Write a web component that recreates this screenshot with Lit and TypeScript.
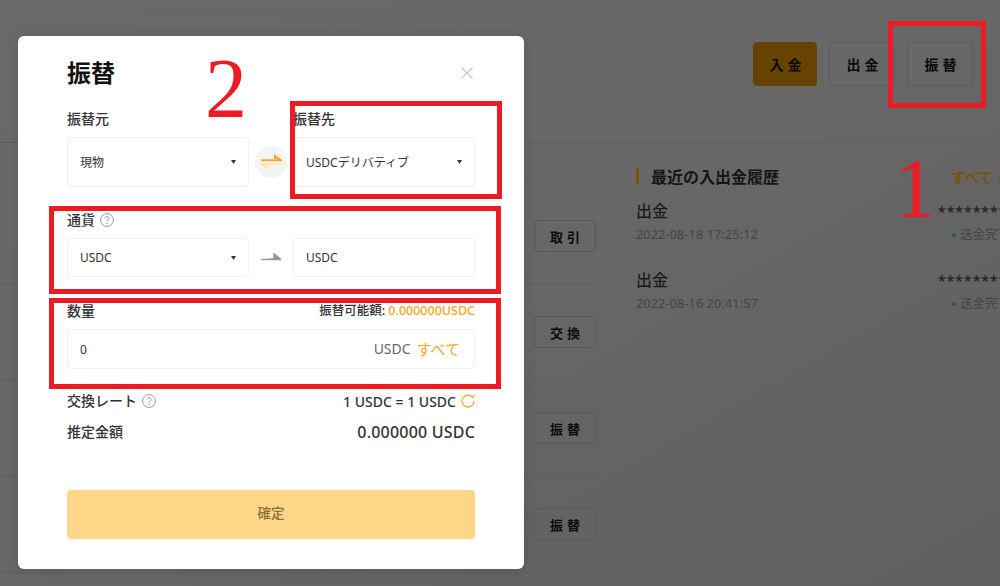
import { LitElement, html, css } from "lit";
import { customElement } from "lit/decorators.js";

const caret = html`<svg class="caret" width="5" height="4" viewBox="0 0 5 4"><path d="M0 0H5L2.5 4Z" fill="#333"/></svg>`;
const help = html`<svg class="help" width="14" height="14" viewBox="0 0 14 14"><circle cx="7" cy="7" r="6.4" fill="none" stroke="#999" stroke-width="1"/><path d="M5.1 5.5a1.9 1.9 0 1 1 2.9 1.6c-.7.45-1 .8-1 1.6" fill="none" stroke="#999" stroke-width="1"/><circle cx="7" cy="10.4" r=".7" fill="#999"/></svg>`;

@customElement("app-root")
export class AppRoot extends LitElement {
  static styles = css`
    :host {
      display: block;
      position: relative;
      width: 1000px;
      height: 586px;
      overflow: hidden;
      font-family: "Noto Sans", "Noto Sans CJK JP", sans-serif;
      color: #1a1a1a;
    }
    .page {
      height: 586px;
      background: linear-gradient(150deg, #6a6a6a 0%, #676767 50%, #5f5f5f 100%);
      display: flex;
      flex-direction: column;
    }
    .topbar { height: 11px; flex: none; border-bottom: 1px solid #646464; box-sizing: border-box; }
    .head {
      height: 132px;
      flex: none;
      box-sizing: border-box;
      border-bottom: 1px solid #5d5d5d;
      display: flex;
      justify-content: flex-end;
      align-items: flex-start;
      padding: 31px 27px 0 0;
      gap: 12px;
    }
    .hbtn {
      height: 44px;
      width: 66px;
      box-sizing: border-box;
      border: 1px solid #5c5c5c;
      border-radius: 4px;
      display: flex;
      align-items: center;
      justify-content: center;
      padding-left: 5px;
      font-size: 14px;
      font-weight: 700;
      letter-spacing: 4px;
      color: #0a0a0a;
    }
    .hbtn.pri { background: #664400; border-color: #664400; width: 64px; }
    .main { display: flex; flex: 1; }
    .rows { width: 596px; flex: none; padding-top: 46px; box-sizing: border-box; }
    .row {
      height: 96px;
      box-sizing: border-box;
      padding-bottom: 1px;
      border-bottom: 1px solid #5f5f5f;
      display: flex;
      align-items: center;
      justify-content: flex-end;
    }
    .rbtn {
      width: 62px;
      height: 32px;
      box-sizing: border-box;
      border: 1px solid #595959;
      border-radius: 3px;
      display: flex;
      align-items: center;
      justify-content: center;
      padding-left: 4px;
      font-size: 13px;
      font-weight: 700;
      letter-spacing: 4px;
      color: #0a0a0a;
    }
    .hist { flex: 1; padding: 23px 0 0 40px; min-width: 0; }
    .hist-head { display: flex; align-items: center; height: 20px; white-space: nowrap; }
    .hist-head .bar { width: 3px; height: 16px; background: #7a5208; margin-right: 12px; flex: none; }
    .hist-head .ttl { font-size: 16px; font-weight: 700; color: #161616; width: 300px; flex: none; }
    .hist-head .all { font-size: 14.5px; font-weight: 700; color: #7a5208; }
    .hist-head .chev { font-size: 14px; font-weight: 700; color: #7a5208; margin-left: 5px; }
    .entry { display: flex; margin-top: 15px; height: 54px; white-space: nowrap; }
    .entry .l { width: 302px; flex: none; }
    .entry .k { font-size: 16px; font-weight: 500; line-height: 20px; color: #1a1a1a; }
    .entry .d { font-size: 12.5px; line-height: 16px; margin-top: 6px; color: #444; letter-spacing: .2px; }
    .entry .stars { font-size: 14px; line-height: 18px; margin-top: 2px; color: #222; font-weight: 500; letter-spacing: 1px; }
    .entry .st { font-size: 12.5px; line-height: 16px; margin-top: 6px; color: #444; display: flex; align-items: center; padding-left: 14px; }
    .dot { width: 4px; height: 4px; border-radius: 50%; background: #0d6b45; margin-right: 4px; flex: none; }

    .modal {
      position: absolute;
      left: 18px;
      top: 36px;
      width: 506px;
      height: 533px;
      box-sizing: border-box;
      background: #fff;
      border-radius: 6px;
      padding: 21px 49px 30px 49px;
      box-shadow: 0 0 16px rgba(0,0,0,.12);
    }
    .title-row { display: flex; justify-content: space-between; align-items: center; height: 32px; }
    .title { font-size: 24px; font-weight: 700; color: #111; line-height: 32px; }
    .close { margin-right: 2px; }
    .lbl { font-size: 14px; font-weight: 500; line-height: 18px; color: #333; display: flex; align-items: center; gap: 5px; }
    .grid { display: grid; grid-template-columns: 182px 44px 182px; align-items: center; }
    .mt21 { margin-top: 21px; }
    .mt9 { margin-top: 9px; }
    .field {
      box-sizing: border-box;
      border: 1px solid #f0f0f0;
      border-radius: 4px;
      display: flex;
      align-items: center;
      justify-content: space-between;
      padding: 0 12px;
      font-size: 12px;
      font-weight: 400;
      color: #333;
      white-space: nowrap;
    }
    .h50 { height: 50px; }
    .h39 { height: 39px; }
    .mid { display: flex; justify-content: center; align-items: center; }
    .swap { width: 32px; height: 32px; border-radius: 50%; background: #f4f4f4; display: flex; align-items: center; justify-content: center; }
    .sec2 { margin-top: 24px; }
    .sec3 { margin-top: 25px; height: 18px; }
    .between { display: flex; justify-content: space-between; align-items: center; }
    .avail { font-size: 12.5px; line-height: 18px; font-weight: 500; color: #333; white-space: nowrap; }
    .org { color: #f5a623; }
    .amount {
      height: 40px;
      margin-top: 9px;
      box-sizing: border-box;
      border: 1px solid #f0f0f0;
      border-radius: 4px;
      display: flex;
      align-items: center;
      justify-content: space-between;
      padding: 0 14px 0 12px;
      font-size: 12px;
      color: #333;
    }
    .amount .unit { font-size: 14px; line-height: 20px; color: #666; display: flex; gap: 6px; align-items: center; }
    .amount .unit .org { font-size: 15px; }
    .rate { margin-top: 23px; height: 18px; }
    .est { margin-top: 13px; height: 18px; }
    .val { font-size: 14px; font-weight: 500; color: #333; display: flex; align-items: center; gap: 5px; white-space: nowrap; }
    .val.big { font-size: 16px; letter-spacing: .2px; }
    .submit {
      margin-top: 49px;
      height: 49px;
      box-sizing: border-box;
      padding-bottom: 5px;
      background: #ffd587;
      border-radius: 4px;
      display: flex;
      align-items: center;
      justify-content: center;
      font-size: 13.5px;
      font-weight: 500;
      color: #8a6f3e;
    }

    .mark { position: absolute; box-sizing: border-box; border: 5px solid #ed1c24; }
    .m1 { left: 888px; top: 21px; width: 98px; height: 87px; }
    .m2 { left: 290px; top: 101px; width: 212px; height: 98px; }
    .m3 { left: 49px; top: 206px; width: 452px; height: 88px; }
    .m4 { left: 49px; top: 298px; width: 452px; height: 91px; }
    .num {
      position: absolute;
      font-family: "Liberation Serif", serif;
      color: #ed1c24;
      line-height: 1;
      font-size: 84px;
    }
    .n1 { left: 894px; top: 147px; }
    .n2 { left: 205px; top: 47px; }
  `;

  render() {
    const rows = ["取引", "交換", "振替", "振替"];
    return html`
      <div class="page">
        <div class="topbar"></div>
        <div class="head">
          <div class="hbtn pri">入金</div>
          <div class="hbtn">出金</div>
          <div class="hbtn">振替</div>
        </div>
        <div class="main">
          <div class="rows">
            ${rows.map((r) => html`<div class="row"><div class="rbtn">${r}</div></div>`)}
          </div>
          <div class="hist">
            <div class="hist-head">
              <span class="bar"></span><span class="ttl">最近の入出金履歴</span><span class="all">すべて</span><span class="chev">›</span>
            </div>
            <div class="entry">
              <div class="l"><div class="k">出金</div><div class="d">2022-08-18 17:25:12</div></div>
              <div><div class="stars">********</div><div class="st"><span class="dot"></span>送金完了</div></div>
            </div>
            <div class="entry">
              <div class="l"><div class="k">出金</div><div class="d">2022-08-16 20:41:57</div></div>
              <div><div class="stars">********</div><div class="st"><span class="dot"></span>送金完了</div></div>
            </div>
          </div>
        </div>
      </div>

      <div class="modal">
        <div class="title-row">
          <div class="title">振替</div>
          <svg class="close" width="12" height="12" viewBox="0 0 12 12"><path d="M.5.5l11 11M11.5.5l-11 11" stroke="#c8c8c8" stroke-width="1.3" fill="none"/></svg>
        </div>
        <div class="grid mt21">
          <div class="lbl">振替元</div><div></div><div class="lbl">振替先</div>
        </div>
        <div class="grid mt9">
          <div class="field h50">現物 ${caret}</div>
          <div class="mid"><div class="swap">
            <svg width="22" height="16" viewBox="0 0 22 16">
              <path d="M1 6.2H21L15 2.2V5" fill="none" stroke="#f5a623" stroke-width="2"/>
              <path d="M21 10.2H1L7 14V11" fill="none" stroke="#fde3b4" stroke-width="2"/>
            </svg>
          </div></div>
          <div class="field h50">USDCデリバティブ ${caret}</div>
        </div>
        <div class="lbl sec2">通貨 ${help}</div>
        <div class="grid mt9">
          <div class="field h39">USDC ${caret}</div>
          <div class="mid">
            <svg width="20" height="9" viewBox="0 0 20 9"><path d="M0 6.5H20L13 1V5" fill="#999" stroke="#999" stroke-width="1.6"/></svg>
          </div>
          <div class="field h39">USDC</div>
        </div>
        <div class="between sec3">
          <div class="lbl">数量</div>
          <div class="avail">振替可能額: <span class="org">0.000000USDC</span></div>
        </div>
        <div class="amount">
          <span>0</span>
          <span class="unit"><span>USDC</span><span class="org">すべて</span></span>
        </div>
        <div class="between rate">
          <div class="lbl">交換レート ${help}</div>
          <div class="val">1 USDC = 1 USDC
            <svg width="14" height="14" viewBox="0 0 14 14"><path d="M11.6 3.2A6 6 0 1 0 13 7" fill="none" stroke="#f5a623" stroke-width="1.2"/><path d="M8.6 1.2l3.4 2.2L13.4.4" fill="none" stroke="#f5a623" stroke-width="1.1"/></svg>
          </div>
        </div>
        <div class="between est">
          <div class="lbl">推定金額</div>
          <div class="val big">0.000000 USDC</div>
        </div>
        <div class="submit">確定</div>
      </div>

      <div class="mark m1"></div>
      <div class="mark m2"></div>
      <div class="mark m3"></div>
      <div class="mark m4"></div>
      <div class="num n1">1</div>
      <div class="num n2">2</div>
    `;
  }
}
